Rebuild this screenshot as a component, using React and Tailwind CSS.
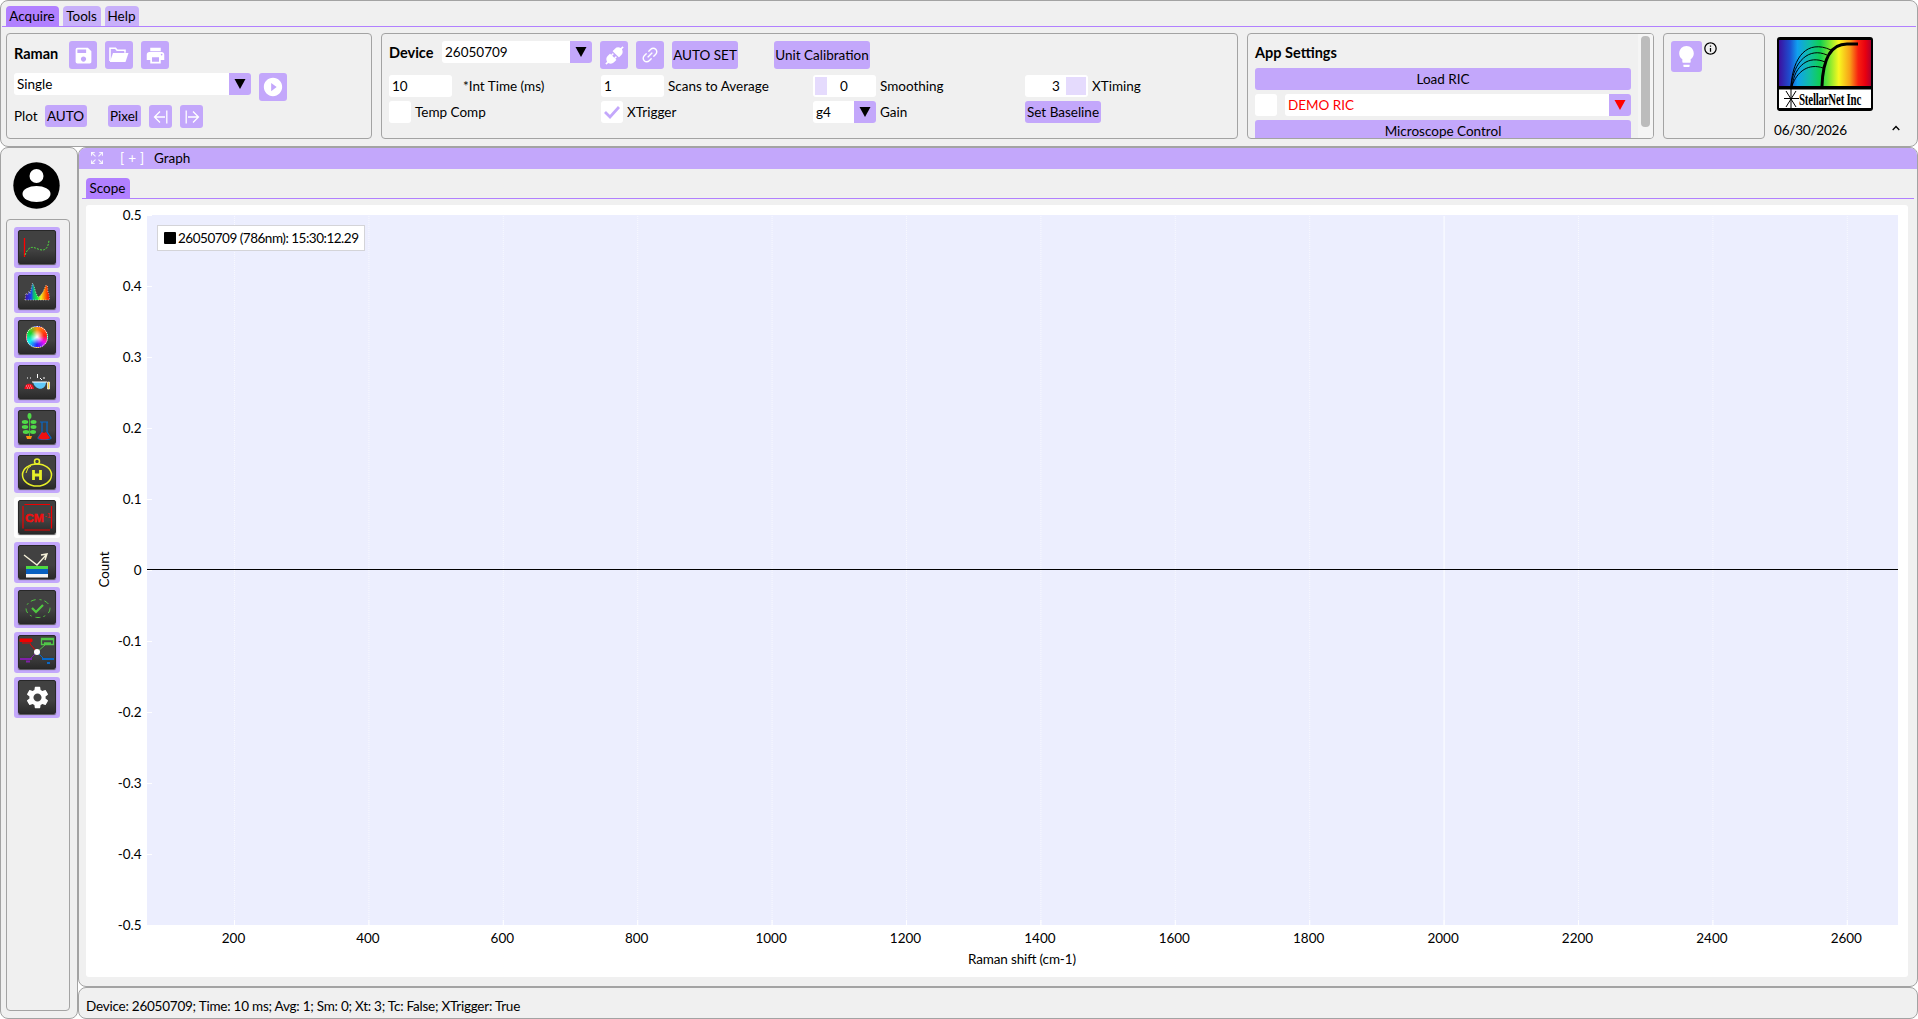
import React from "react";
import { MdSave, MdPrint, MdPlayCircleFilled, MdLightbulb, MdSettings, MdInfoOutline } from "react-icons/md";
import { AiFillApi, AiOutlineLink } from "react-icons/ai";
import { BsArrowsFullscreen } from "react-icons/bs";

const Btn = ({ className = "", children }) => (
  <button className={"flex shrink-0 items-center justify-center rounded-[3px] bg-[#c3a7fb] whitespace-nowrap " + className}>{children}</button>
);

const Field = ({ className = "", children }) => (
  <div className={"flex h-[22px] shrink-0 items-center rounded-[3px] bg-white " + className}>{children}</div>
);

const Select = ({ className = "", arrow = "#000", children }) => (
  <div className={"flex h-[22px] shrink-0 items-center overflow-hidden rounded-[3px] bg-white " + className}>
    <span className="flex-1 pl-[3px]">{children}</span>
    <span className="flex h-full w-[22px] items-center justify-center bg-[#c3a7fb]">
      <svg width="12" height="10" viewBox="0 0 12 10"><path d="M.5 0h11L6 10z" fill={arrow} /></svg>
    </span>
  </div>
);

const Group = ({ className = "", children }) => (
  <section className={"h-[106px] shrink-0 overflow-hidden rounded-[4px] border border-[#a3a3a3] pl-[7px] pt-[7px] " + className}>{children}</section>
);

const Folder = () => (
  <svg width="20" height="16" viewBox="0 0 20 16">
    <path d="M1 14V1.2h5.5l1.6 2H16v2.6" fill="none" stroke="#fff" strokeWidth="1.6" />
    <path d="M4 6h15.5l-3 9H.8z" fill="#fff" />
  </svg>
);

const Step = ({ flip }) => (
  <svg width="16" height="14" viewBox="0 0 16 14" className={flip ? "rotate-180" : ""} fill="none" stroke="#fff" strokeWidth="1.3">
    <path d="M13.8.5v13M12 7H1.5M7 1.5 1.5 7 7 12.500" />
  </svg>
);

const Logo = () => (
  <svg width="96" height="74" viewBox="0 0 96 74">
    <defs>
      <linearGradient id="spectrum">
        <stop offset="0" stopColor="#3c10a0" /><stop offset=".12" stopColor="#1c50d0" /><stop offset=".2" stopColor="#10a0f0" />
        <stop offset=".34" stopColor="#10c0a0" /><stop offset=".45" stopColor="#10d050" /><stop offset=".55" stopColor="#80e830" />
        <stop offset=".65" stopColor="#f8f820" /><stop offset=".77" stopColor="#f8a018" /><stop offset=".86" stopColor="#f82010" />
        <stop offset=".94" stopColor="#e80010" /><stop offset="1" stopColor="#b00030" />
      </linearGradient>
    </defs>
    <rect width="96" height="74" rx="3" />
    <rect x="2" y="3" width="92" height="46" fill="url(#spectrum)" />
    <rect x="2" y="52.500" width="92" height="18.500" fill="#fff" />
    <g fill="none" stroke="#000">
      <path d="M14 49C16 20 30 2 54 13M14 49C17 24 32 10 50 18M15 49C18 28 32 18 48 25M15 49C20 34 32 26 46 31" strokeWidth="1" />
      <path d="M45 49C46 18 56 7 70 7H81" strokeWidth="3" />
      <path d="M14 52v20M7 61.500h15M9 54l10 16M19 54 9 70" strokeWidth="1" />
    </g>
    <text transform="translate(22 67.500) scale(.68 1)" className="[font-family:'Liberation_Serif',serif] text-[16px] font-bold tracking-[-0.3px]">StellarNet Inc</text>
  </svg>
);

const tileArt = [
  <g fill="none"><path d="M6.500 8v19" stroke="#f00" strokeWidth="1.300" /><path d="M7 25c4-10 8-8 13-6s10 2 11-9" stroke="#50d840" strokeDasharray="2 1.200" /></g>,
  <g><defs><linearGradient id="peaks"><stop stopColor="#4010a0" /><stop offset=".25" stopColor="#2040f0" /><stop offset=".35" stopColor="#10b080" /><stop offset=".5" stopColor="#10f040" /><stop offset=".65" stopColor="#f0f020" /><stop offset=".82" stopColor="#ff7000" /><stop offset="1" stopColor="#f00000" /></linearGradient></defs>
    <path d="M7 25L8 18 9.500 20 11 16 12 19 14.500 8 16 11 18 18 20 22 22 21 25 17 28 10 29.500 11 30 17 31 19 31.500 25z" fill="url(#peaks)" stroke="#fff" strokeWidth=".6" strokeDasharray="1 1.500" /></g>,
  null,
  <g><path d="M6.500 24c0-7 9-7 9.500 0z" fill="#f01020" /><path d="M8 21h6M9 23h6" stroke="#fff" strokeWidth=".7" strokeDasharray="1 1" /><path d="M15 17h13c0 9-11 9-13 0z" fill="#60c8f8" /><path d="M14 17h15M9 13h1M12 13h1M19.500 9v4M22 13l2 2M25 13h2" stroke="#fff" /><path d="M29.500 17h2v7h-2z" fill="#f8d040" stroke="#fff" strokeWidth=".7" /></g>,
  <g><path d="M11.500 6v20" stroke="#40b838" strokeWidth="1" /><g fill="#50d848"><ellipse cx="11.500" cy="6" rx="2" ry="3" /><ellipse cx="7" cy="12" rx="3.200" ry="1.900" /><ellipse cx="15.500" cy="12" rx="3" ry="1.900" /><ellipse cx="7" cy="17" rx="3.200" ry="1.900" /><ellipse cx="15.500" cy="17" rx="3" ry="1.900" /><ellipse cx="8" cy="22" rx="3.200" ry="1.900" /><ellipse cx="15" cy="22" rx="3" ry="1.900" /></g><path d="M8 26h6l-1 3H9z" fill="#ff9010" /><path d="M22 12h8M24 12v10l-4 6c0 2 13 2 13 0l-4-6V12" fill="none" stroke="#0868c8" strokeWidth="1.200" /><path d="M24 22l2 1 2-1 4 6c-3 2-9 2-12 0z" fill="#f01010" /></g>,
  <g fill="none" stroke="#e8f028" strokeWidth="1.500"><ellipse cx="19" cy="20" rx="14.500" ry="11" /><circle cx="19" cy="6.500" r="2.500" /><path d="M8 18l2-5 3-2" strokeWidth="1" /><path d="M15.500 15v10M22.500 15v10M15 20h8" strokeWidth="2.800" /></g>,
  <g><path d="M5 6V28.500M33.500 6V28.500M6.500 4.500H32M6.500 30H32" stroke="#f00000" strokeWidth="1.200" /><text transform="translate(7 21.500) scale(1.1 1)" fill="#f01010" className="[font-family:'Liberation_Sans',sans-serif] text-[11px] font-bold" stroke="#f01010" strokeWidth=".4">CM</text><text x="26.500" y="18" fill="#f01010" className="[font-family:'Liberation_Sans',sans-serif] text-[7px]">-1</text></g>,
  <g><path d="M6 10l13 10L29 9M23 10l6-1-2 6" fill="none" stroke="#f4f0d8" strokeWidth="1.400" /><path d="M8 21h22v3H8z" fill="#50d840" /><path d="M8 24h22v5H8z" fill="#0860c0" /><path d="M8 29h22v3.500H8z" fill="#f4f4f4" /></g>,
  <g fill="none" stroke="#50c840"><ellipse cx="20" cy="18.500" rx="12" ry="9" strokeDasharray="5 4 2 3" /><path d="M14 18l4 4 7-7" strokeWidth="2.200" /></g>,
  <g fill="none"><path d="M12 9l7 8" stroke="#f00000" /><path d="M19 17l8-7" stroke="#50c848" /><path d="M19 17l-8 8" stroke="#8020a8" /><path d="M19 17l8 8" stroke="#0868c8" /><path d="M2 4h12v2.500H2zM4 8h9" fill="#f00000" stroke="#f00000" strokeWidth="1" /><path d="M23.500 3.500h12v6h-12zM26 8h7M23 4.500h12" stroke="#50c848" strokeWidth="1.300" /><path d="M2 24h12M8 26.500h4" stroke="#8020a8" strokeWidth="2" /><path d="M24 24h12M29 28h3" stroke="#0868c8" strokeWidth="2" /><circle cx="19" cy="17" r="3" fill="#fff" /></g>,
  null,
];

const Tile = ({ i }) => (
  <div className={(i === 6 ? "bg-white" : "bg-[#c3a7fb]") + " flex h-[41px] w-[46px] justify-center rounded-[3px] pt-[3px]"}>
    <div className="flex h-[34px] w-[38px] items-center justify-center overflow-hidden rounded-[2px] border border-[#282828] bg-linear-to-b from-[#414141] from-60% to-[#2b2b2b] shadow-[0_1px_1px_#555]">
      {i === 2 && <div className="size-[22px] rounded-full border border-dotted border-white bg-[radial-gradient(circle,#fff,transparent_50%),conic-gradient(#ff9010,#ff2010_80deg,#f010f0_125deg,#3020ff_180deg,#10f0f0_240deg,#10d830_300deg,#ff9010)]" />}
      {i === 10 && <MdSettings size={27} color="#fff" />}
      {tileArt[i] && <svg width="38" height="34" viewBox="0 0 38 34" className="shrink-0">{tileArt[i]}</svg>}
    </div>
  </div>
);

const yTicks = ["0.5", "0.4", "0.3", "0.2", "0.1", "0", "-0.1", "-0.2", "-0.3", "-0.4", "-0.5"];
const xTicks = Array.from({ length: 13 }, (_, i) => 200 * (i + 1));

const Chart = () => (
  <svg width="1822" height="772" viewBox="86 205 1822 772" className="rounded-[3px] bg-white">
    <rect x="147" y="215" width="1751" height="710" fill="#eceefe" />
    {xTicks.map((v, i) => {
      const x = 234.5 + i * 134.4;
      return (
        <g key={v}>
          <path d={`M${x} 216V925`} stroke="#f8f9ff" strokeWidth={i === 9 ? 1.500 : 1} strokeDasharray={i === 9 ? "none" : "1 1"} />
          <path d={`M${x} 920V925`} stroke="#fff" />
          <text x={x - 1} y="943" textAnchor="middle">{v}</text>
        </g>
      );
    })}
    {yTicks.map((v, i) => (
      <g key={v}>
        <path d={`M147 ${215.5 + i * 71}h5`} stroke="#fff" />
        <text x="141.500" y={220 + i * 71} textAnchor="end">{v}</text>
      </g>
    ))}
    <rect x="147" y="569" width="1751" height="1" />
    <text x="1022" y="964" textAnchor="middle" textLength="108">Raman shift (cm-1)</text>
    <text transform="translate(109 569.500) rotate(-90)" textAnchor="middle" textLength="36">Count</text>
    <rect x="157.500" y="225.500" width="207" height="25" fill="#fff" stroke="#d4d4d8" />
    <rect x="164" y="232" width="12" height="12" rx="1" />
    <text x="178" y="243" textLength="181">26050709 (786nm): 15:30:12.29</text>
  </svg>
);

export default function App() {
  return (
    <div className="flex h-[1019px] w-[1918px] flex-col overflow-hidden bg-white [font-family:Lato,sans-serif] text-[13.500px] leading-[18px] text-black">
      <header className="h-[147px] shrink-0 rounded-[8px] border border-[#a3a3a3] bg-[#f0f0f0] px-px">
        <nav className="flex h-[26px] items-end gap-1 border-b border-[#b180ff] pl-1">
          <div className="flex h-5 w-[53px] items-center justify-center rounded-t-[4px] bg-[#b180ff] pr-px">Acquire</div>
          <div className="flex h-5 w-[38px] items-center justify-center rounded-t-[4px] bg-[#c8b0fa] pr-px">Tools</div>
          <div className="flex h-5 w-[34px] items-center justify-center rounded-t-[4px] bg-[#c8b0fa] pr-px">Help</div>
        </nav>
        <div className="flex pl-1 pt-[6px]">
          <Group className="w-[366px]">
            <div className="flex h-7 gap-2">
              <b className="w-[47px] pt-1 text-[14.500px]">Raman</b>
              <Btn className="size-7"><MdSave size={21} color="#fff" /></Btn>
              <Btn className="size-7"><Folder /></Btn>
              <Btn className="size-7"><MdPrint size={21} color="#fff" /></Btn>
            </div>
            <div className="mt-1 flex h-8 gap-2">
              <Select className="w-[237px]">Single</Select>
              <Btn className="size-7"><MdPlayCircleFilled size={22} color="#fff" /></Btn>
            </div>
            <div className="flex items-start">
              <span className="w-[31px] pt-[2px]">Plot</span>
              <Btn className="h-[22px] w-[42px] pr-px">AUTO</Btn>
              <Btn className="ml-[21px] h-[22px] w-[33px] pr-px">Pixel</Btn>
              <Btn className="ml-2 size-[23px]"><Step /></Btn>
              <Btn className="ml-2 size-[23px]"><Step flip /></Btn>
            </div>
          </Group>

          <Group className="ml-[9px] w-[857px]">
            <div className="flex h-[34px] items-start">
              <b className="w-[53px] pt-[3px] text-[14.500px]">Device</b>
              <Select className="w-[150px]">26050709</Select>
              <Btn className="ml-2 size-7"><AiFillApi size={23} color="#fff" /></Btn>
              <Btn className="ml-2 size-7"><AiOutlineLink size={20} color="#fff" /></Btn>
              <Btn className="ml-2 h-7 w-[66px]">AUTO SET</Btn>
              <Btn className="ml-9 h-7 w-24">Unit Calibration</Btn>
            </div>
            <div className="grid grid-cols-[212px_212px_212px_1fr] gap-y-1">
              <div className="flex items-center gap-[11px]"><Field className="w-[63px] pl-[3px]">10</Field>*Int Time (ms)</div>
              <div className="flex items-center gap-1"><Field className="w-[63px] pl-[3px]">1</Field>Scans to Average</div>
              <div className="flex items-center gap-1">
                <Field className="w-[63px] pl-[2px]"><span className="h-[18px] w-3 bg-[#e5dbfd]" /><span className="ml-[13px]">0</span></Field>Smoothing
              </div>
              <div className="flex items-center gap-1">
                <Field className="w-[63px] pl-[27px]">3<span className="ml-[6px] h-[18px] w-5 bg-[#e5dbfd]" /></Field>XTiming
              </div>
              <div className="flex items-center gap-1"><Field className="w-[22px]" />Temp Comp</div>
              <div className="flex items-center gap-1">
                <Field className="w-[22px] justify-center"><svg width="16" height="13" viewBox="0 0 16 13"><path d="M1 6l5 5L15 1" fill="none" stroke="#c3a7fb" strokeWidth="2.800" /></svg></Field>XTrigger
              </div>
              <div className="flex items-center gap-1"><Select className="w-[63px]">g4</Select>Gain</div>
              <Btn className="h-[22px] w-[76px]">Set Baseline</Btn>
            </div>
          </Group>

          <Group className="ml-[9px] flex w-[407px] justify-between">
            <div className="w-[376px]">
              <b className="mt-[3px] block h-6 text-[14.500px]">App Settings</b>
              <Btn className="h-[22px] w-full">Load RIC</Btn>
              <div className="my-1 flex gap-2 text-[#f00]">
                <Field className="w-[22px]" />
                <Select className="w-[346px]" arrow="#f00">DEMO RIC</Select>
              </div>
              <Btn className="h-[22px] w-full">Microscope Control</Btn>
            </div>
            <div className="-mt-[7px] h-[104px] w-[15px] bg-[#f5f5f5] pl-[3px] pt-[2px]"><div className="h-[91px] w-[9px] rounded-[4px] bg-[#bcbcbc]" /></div>
          </Group>

          <Group className="ml-[9px] flex w-[102px] gap-px">
            <Btn className="size-[31px]"><MdLightbulb size={25} color="#fff" /></Btn>
            <MdInfoOutline size={15} />
          </Group>

          <div className="ml-[9px] flex h-[106px] w-[140px] flex-col pt-1">
            <div className="pl-[3px]"><Logo /></div>
            <div className="mt-[10px] flex items-center justify-between pr-[14px]">
              <span className="tracking-[-0.2px]">06/30/2026</span>
              <svg width="8" height="6" viewBox="0 0 8 6" className="mb-1"><path d="M.7 5 4 1.500 7.300 5" fill="none" stroke="#000" strokeWidth="1.300" /></svg>
            </div>
          </div>
        </div>
      </header>

      <div className="flex min-h-0 flex-1">
        <aside className="flex w-[78px] shrink-0 flex-col rounded-[8px] border border-[#a3a3a3] bg-[#f0f0f0] pl-[5px]">
          <svg width="48" height="48" viewBox="0 0 48 48" className="ml-[6px] mt-[13px]">
            <circle cx="24.500" cy="24.500" r="23.200" /><circle cx="24.500" cy="15" r="7" fill="#fff" /><ellipse cx="24.500" cy="33" rx="14" ry="8" fill="#fff" />
          </svg>
          <div className="mb-[7px] mt-[10px] flex w-16 flex-1 flex-col gap-1 rounded-[4px] border border-[#a3a3a3] pl-[7px] pt-[7px]">
            {tileArt.map((_, i) => <Tile key={i} i={i} />)}
          </div>
        </aside>
        <div className="flex min-w-0 flex-1 flex-col">
          <main className="h-[840px] overflow-hidden rounded-[8px] border border-[#a3a3a3] bg-[#f0f0f0]">
            <div className="flex h-[21px] items-center bg-[#c3a7fb] pb-[2px] pl-3">
              <BsArrowsFullscreen size={12} color="#fff" strokeWidth=".5" />
              <span className="ml-[17px] w-[34px] tracking-[4px] text-white">[+]</span>
              <span>Graph</span>
            </div>
            <div className="mx-[3px] flex h-[30px] items-end border-b border-[#b180ff] pl-1">
              <div className="flex h-5 w-11 items-center justify-center rounded-t-[4px] bg-[#b180ff] pr-px">Scope</div>
            </div>
            <div className="pl-[7px] pt-[6px]"><Chart /></div>
          </main>
          <footer className="flex flex-1 items-center rounded-[8px] border border-[#a3a3a3] bg-[#f0f0f0] pl-[7px] pt-[6px] tracking-[-0.23px]">
            Device: 26050709; Time: 10 ms; Avg: 1; Sm: 0; Xt: 3; Tc: False; XTrigger: True
          </footer>
        </div>
      </div>
    </div>
  );
}
